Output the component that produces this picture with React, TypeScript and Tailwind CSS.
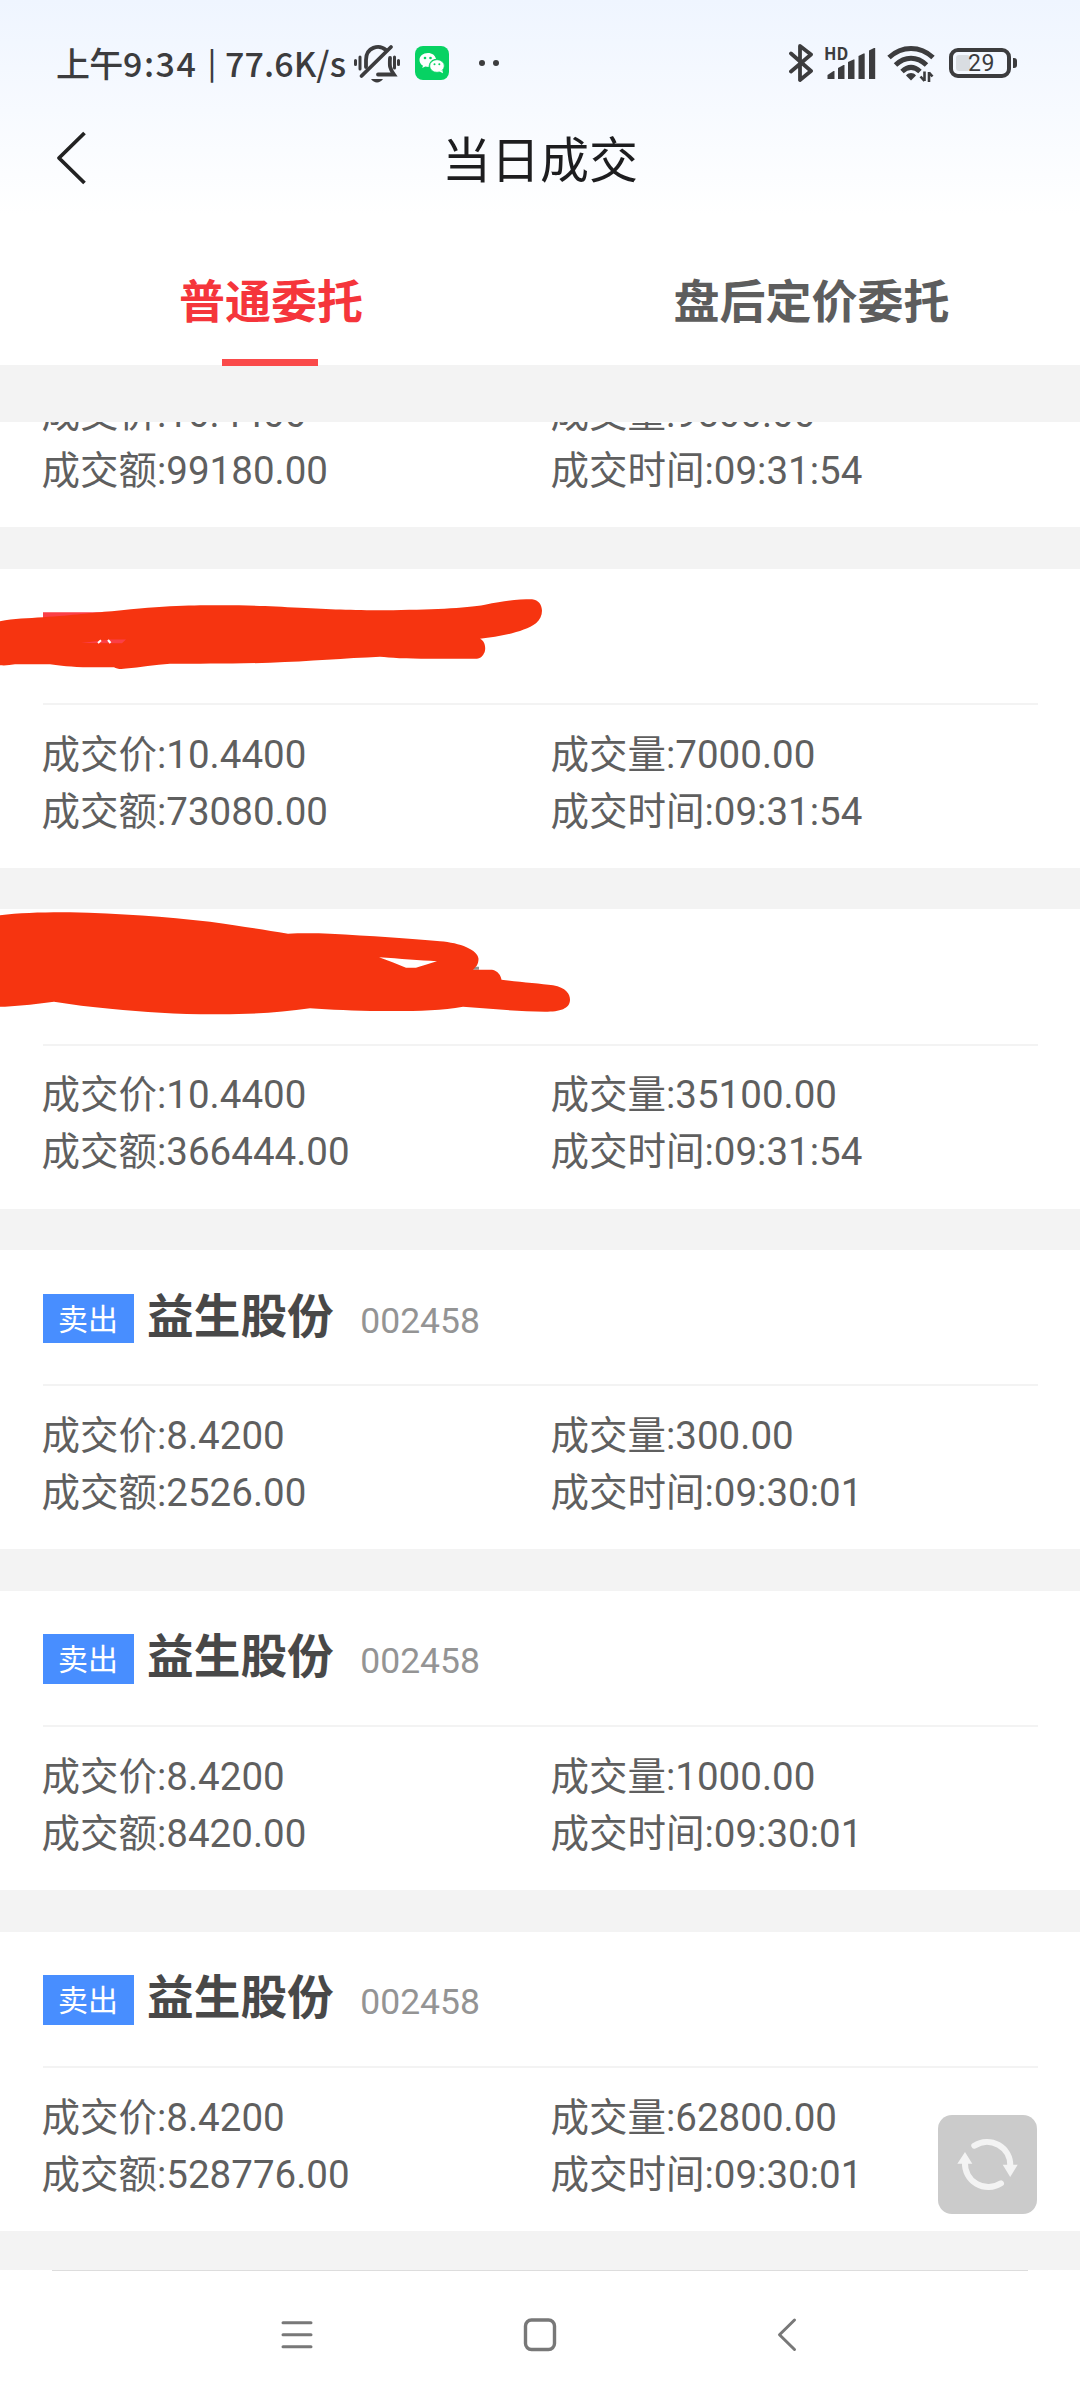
import React from "react";

const SANS = "font-['Roboto','Noto_Sans_CJK_SC',sans-serif]";
const CJK = "font-['Noto_Sans_CJK_SC',sans-serif]";

type Trade = {
  header: "stock" | "marked" | "none";
  price: string;
  volume: string;
  amount: string;
  time: string;
  mark?: React.ReactNode;
};

function ScribbleOne() {
  return (
    <svg className="absolute left-0 top-0" width="600" height="134" viewBox="0 568.7 600 134">
      <path d="M43 612H115L113 618L43 624Z" fill="#fb3f46" />
      <path
        fill="#f63410"
        d="M0 621C14 618 28 618 43 617C75 615 90 612.500 112 611C165 605 195 605 220 605C250 605 270 605.500 300 607.500C330 609 350 610 385 610C430 609.500 465 608 485 604.500C505 600 518 599 532 599C544 600 545 616 536 623C524 632 500 636 480 638.500C486 641 486 650 484 653C482 657 480 658.500 475 658.500H430C405 658.500 390 657.500 380 656.500C345 658 310 661 270 662.500C230 663.500 200 663.500 170 663.500C155 664.500 140 667 126 668.300C122 669 117 669 114 667H90C70 667 60 665 50 664H15C10 665 5 665.300 0 665Z"
      />
      <path d="M81 642.700L110 639.200H126L122 643Z" fill="#fb3f46" />
      <path d="M98 642.700L101 640M108 639.700L110.500 642.700" stroke="#ffffff" strokeWidth="2" />
    </svg>
  );
}

function ScribbleTwo() {
  return (
    <svg className="absolute left-0 top-0" width="600" height="134" viewBox="0 909.3 600 134">
      <path d="M474 967H479V970H472Z" fill="#929292" />
      <path
        fill="#f63410"
        fillRule="evenodd"
        d="M0 915.500C20 913 45 912.300 70 912.500C120 913.500 165 917 210 922C240 926 262 930 288 934C300 933.500 315 933.500 330 934C370 936 410 939 440 941.500C460 943 478 950 478.500 959C478.500 965 476 967 473 970H492C498 971 501 976 501.500 980C518 982 540 984 553 985.500C566 988 570 994 570 1000C570 1009 560 1012 545 1012C518 1012 490 1009 463 1007C440 1011 415 1011.500 380 1011.300C355 1011 330 1010 310 1008.500C280 1013 250 1014.700 215 1014.500C175 1014.500 145 1012.500 110 1009C90 1007 72 1005 54 1002C38 1004 22 1006 5 1007H0ZM379 957.500C400 959 420 960.500 437 961.500C429 964 422 966 416 968H406C397 964 388 960.500 379 957.500Z"
      />
    </svg>
  );
}

const trades: Trade[] = [
  { header: "none", price: "10.4400", volume: "9500.00", amount: "99180.00", time: "09:31:54" },
  { header: "marked", price: "10.4400", volume: "7000.00", amount: "73080.00", time: "09:31:54", mark: <ScribbleOne /> },
  { header: "marked", price: "10.4400", volume: "35100.00", amount: "366444.00", time: "09:31:54", mark: <ScribbleTwo /> },
  { header: "stock", price: "8.4200", volume: "300.00", amount: "2526.00", time: "09:30:01" },
  { header: "stock", price: "8.4200", volume: "1000.00", amount: "8420.00", time: "09:30:01" },
  { header: "stock", price: "8.4200", volume: "62800.00", amount: "528776.00", time: "09:30:01" },
];

function TradeCard({ t }: { t: Trade }) {
  return (
    <article className="relative mb-[41.35px] h-[299.4px] shrink-0 bg-white px-[42.5px]">
      <div className="flex h-[134.2px] items-start">
        {t.header === "stock" && (
          <>
            <span className="mt-[43.6px] h-[49.6px] w-[91px] bg-[#488eff] pt-px text-center text-[30px] leading-[49px] text-white">
              卖出
            </span>
            <div className="mt-[36.500px] ml-[13.500px] flex items-baseline leading-[60px]">
              <h2 className="text-[46.700px] font-bold text-[#484848]">益生股份</h2>
              <span className="ml-[26.500px] text-[35.500px] text-[#949494]">002458</span>
            </div>
          </>
        )}
      </div>
      <div className="h-[2px] bg-[#f3f3f3]" />
      <div className="-ml-[1px] grid grid-cols-[509px_1fr] pt-[20.900px] text-[38.500px] leading-[57px] whitespace-nowrap text-[#5f5f5f]">
        <span>成交价:{t.price}</span>
        <span>成交量:{t.volume}</span>
        <span>成交额:{t.amount}</span>
        <span>成交时间:{t.time}</span>
      </div>
      {t.mark}
    </article>
  );
}

function StatusBar() {
  return (
    <div className={`flex h-[110px] items-start text-[#3c3c3e] ${CJK}`}>
      <div className="mt-[37.500px] ml-[56px] flex h-[50px] w-[293px] text-[34px] leading-[50px] font-medium whitespace-nowrap">
        <span className="w-[67px] tracking-[-0.8px]">上午</span>
        <span className="w-[79px] tracking-[1.500px]">9:34</span>
        <span className="w-[20px] -translate-y-[2px] text-center text-[30px]">|</span>
        <span className="ml-[3px] tracking-[0.1px]">77.6K/s</span>
      </div>
      <svg className="mt-[44px] ml-[5px]" width="48" height="40" viewBox="354 44 48 40" fill="none" stroke="#3c3c3e" strokeLinecap="round">
        <path d="M366 67V60C366 47 379 44 386 50" strokeWidth="3.800" />
        <path d="M390 58C389.500 66 389.500 68 394 74.500H378" strokeWidth="3.800" />
        <path d="M361.500 76L391 47" strokeWidth="3.800" />
        <path d="M355.500 60.500V64.500M360 57V69M394.500 57V68M398.500 60.500V64.500" strokeWidth="3" />
        <path d="M371 79H383C380 83.500 374 83.500 371 79Z" fill="#3c3c3e" stroke="none" />
      </svg>
      <svg className="mt-[46px] ml-[13px]" width="34" height="34" viewBox="0 0 34 34">
        <rect width="34" height="34" rx="8" fill="#07d263" />
        <path d="M13 7C8 7 4.500 10 4.500 14C4.500 16.500 5.800 18.500 8 19.700L7.200 22L10.300 20.600C11.300 20.900 12.500 21 13.600 21C14 15.500 17.500 13 21 13C20.300 9.300 17 7 13 7Z" fill="white" />
        <ellipse cx="22" cy="20" rx="7.300" ry="6.300" fill="white" stroke="#07d263" strokeWidth="0.700" />
        <path d="M24.500 25.500L28 27.300L27.300 24Z" fill="white" />
        <g fill="#07d263">
          <circle cx="10" cy="12" r="1.300" /><circle cx="15.500" cy="12" r="1.300" />
          <circle cx="19.500" cy="18.300" r="1" /><circle cx="24.300" cy="18.300" r="1" />
        </g>
      </svg>
      <div className="mt-[60px] ml-[30px] flex gap-[8px]">
        <i className="size-[6px] rounded-full bg-[#3c3c3e]" />
        <i className="size-[6px] rounded-full bg-[#3c3c3e]" />
      </div>
      <svg className="mt-[43px] ml-[290px]" width="24" height="40" viewBox="0 0 24 40" fill="none" stroke="#3c3c3e" strokeWidth="3.800" strokeLinecap="round" strokeLinejoin="round">
        <path d="M2 10.500L22 28L11 37V3L22 11.500L2 28.500" />
      </svg>
      <div className="relative mt-[43px] ml-[11px] h-[38px] w-[52px]">
        <span className="absolute top-0 left-0 text-[16.500px] leading-[20px] font-bold">HD</span>
        <svg className="absolute top-0 left-0" width="52" height="38" viewBox="824 43 52 38" fill="#3c3c3e">
          <path d="M827.500 79V75L833.500 71H834.500V79Z" />
          <path d="M838 79V68L843.500 65H844.500V79Z" />
          <path d="M848 79V62L853.500 59.500H854.500V79Z" />
          <path d="M858.500 79V56L863.500 53.500H864.700V79Z" />
          <path d="M869 79V50.500L874 48H875.200V79Z" />
        </svg>
      </div>
      <svg className="mt-[43px] ml-[10px]" width="50" height="40" viewBox="886 43 50 40" fill="none" stroke="#3c3c3e">
        <path d="M889 57.500C902 45.500 920 45.500 933 57.500M895.500 65C905 56 917 56 926.500 65M902 71.500C908 66 914 66 920 71.500" strokeWidth="5" />
        <path d="M906 75.500C909 72.300 913 72.300 916 75.500L911 80.500Z" fill="#3c3c3e" stroke="none" />
        <path d="M924.500 71.500V81M924.500 81L920.500 76.500M929 82V72M929 72.500L932.500 76.500" strokeWidth="2.600" />
      </svg>
      <div className="relative mt-[48px] ml-[13px] h-[30px] w-[62px] rounded-[9px] border-4 border-[#3c3c3e]">
        <i className="absolute top-[3px] left-[3px] h-[16px] w-[14px] rounded-[3px] bg-[#d9dde2]" />
        <span className="absolute inset-0 pl-[3px] text-center font-['Roboto',sans-serif] text-[23px] leading-[24px] tracking-[0.500px]">29</span>
        <i className="absolute top-[6px] -right-[10px] h-[10px] w-[4px] rounded-r-[3px] bg-[#3c3c3e]" />
      </div>
    </div>
  );
}

export default function App() {
  return (
    <div className={`relative flex h-[2400px] w-[1080px] flex-col overflow-hidden bg-[#f3f3f3] ${SANS}`}>
      <header className="flex h-[365px] shrink-0 flex-col bg-white bg-[linear-gradient(to_bottom,#eff5ff_0px,#f7faff_110px,#ffffff_215px)]">
        <StatusBar />
        <div className="relative flex h-[140px] items-start justify-center">
          <svg className="absolute top-[20px] left-[55px]" width="32" height="56" viewBox="0 0 32 56" fill="none" stroke="#222222" strokeWidth="3.800">
            <path d="M29.500 3L4 28L29.500 53" strokeLinejoin="round" />
          </svg>
          <h1 className="mt-[22px] text-[49px] leading-[60px] font-normal text-[#1d1d1f]">当日成交</h1>
        </div>
        <div className="grid h-[115px] grid-cols-2 text-center text-[46px] leading-[60px] font-bold">
          <div className="relative pt-[22px] text-[#f5353b]">
            <div className="pl-[2px]">普通委托</div>
            <i className="absolute top-[109px] left-[222px] h-[7px] w-[96px] bg-[#fa4a4a]" />
          </div>
          <div className="pt-[22px] pl-[3px] text-[#5d5d5d]">盘后定价委托</div>
        </div>
      </header>
      <main className="mt-[57px] h-[1848px] shrink-0 overflow-hidden">
        <div className="-mt-[194.150px] flex flex-col">
          {trades.map((t, i) => (
            <TradeCard key={i} t={t} />
          ))}
        </div>
      </main>
      <nav className="flex h-[130px] shrink-0 flex-col bg-white">
        <div className="mx-[52px] h-px bg-[#dddddd]" />
        <div className="flex pt-[46px] pl-[281px]">
          <svg width="32" height="36" viewBox="0 0 32 36" stroke="#787878" strokeWidth="3" strokeLinecap="round">
            <path d="M2 5.700H30M2 17.700H30M2 29.700H30" />
          </svg>
          <svg className="ml-[210px]" width="34" height="36" viewBox="0 0 34 36" fill="none" stroke="#787878" strokeWidth="3.400">
            <rect x="2.500" y="3" width="29" height="29.500" rx="6" />
          </svg>
          <svg className="ml-[219px]" width="22" height="36" viewBox="0 0 22 36" fill="none" stroke="#787878" strokeWidth="3" strokeLinecap="round" strokeLinejoin="round">
            <path d="M18.500 3L3.500 17.700L18.500 32.500" />
          </svg>
        </div>
      </nav>
      <button className="absolute top-[2115px] left-[938px] size-[99px] rounded-[14px] bg-[#cbcbcb]">
        <svg width="99" height="99" viewBox="0 0 99 99" fill="none" stroke="#f3f3f3" strokeWidth="6" strokeLinecap="round">
          <path d="M36.300 30.700A23.300 23.300 0 0 1 72.300 51M63 68.300A23.300 23.300 0 0 1 27 47.500" />
          <path d="M64.700 49.700H79.700L72.200 62ZM19.300 48.700H34.300L27 37Z" fill="#f3f3f3" stroke="none" />
        </svg>
      </button>
    </div>
  );
}
